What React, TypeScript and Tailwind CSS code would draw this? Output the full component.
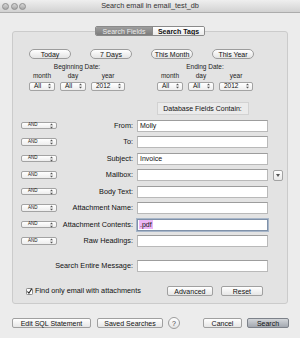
// Search email dialog

const rows = [
  { label: 'From:', value: 'Molly' },
  { label: 'To:' },
  { label: 'Subject:', value: 'Invoice' },
  { label: 'Mailbox:', extra: true },
  { label: 'Body Text:' },
  { label: 'Attachment Name:' },
  { label: 'Attachment Contents:', value: '.pdf', focus: true },
  { label: 'Raw Headings:' },
]

function Arrows() {
  return (
    <svg width="3" height="6" viewBox="0 0 3 6" className="shrink-0">
      <path d="M0 2.3 L1.5 0.6 L3 2.3Z M0 3.7 L1.5 5.4 L3 3.7Z" fill="#555" />
    </svg>
  )
}

function Popup({ value, className }: { value: string; className: string }) {
  return (
    <div
      className={`h-[9px] rounded-[2px] border border-[#a3a3a3] bg-linear-to-b from-white to-[#ededed] flex items-center justify-between pl-[4px] pr-[3px] text-[6.5px] leading-none ${className}`}
    >
      <span>{value}</span>
      <Arrows />
    </div>
  )
}

function Pill({ label, className }: { label: string; className: string }) {
  return (
    <div
      className={`h-[10px] rounded-full border border-[#9c9c9c] bg-linear-to-b from-white to-[#e4e4e4] flex items-center justify-center text-[7px] leading-none ${className}`}
    >
      {label}
    </div>
  )
}

function Button({ label, className, primary }: { label: string; className: string; primary?: boolean }) {
  return (
    <div
      className={`h-[10px] rounded-[2px] border flex items-center justify-center text-[7px] leading-none ${
        primary
          ? 'border-[#7d828a] bg-linear-to-b from-[#d3d6da] to-[#a3a8b0]'
          : 'border-[#a0a0a0] bg-linear-to-b from-white to-[#e6e6e6]'
      } ${className}`}
    >
      {label}
    </div>
  )
}

function TextField({ value, focus }: { value?: string; focus?: boolean }) {
  return (
    <div
      className={`w-[131px] h-[12px] bg-white border flex items-center pl-[1px] text-[7px] leading-none ${
        focus
          ? 'border-[#7f91a9] shadow-[0_0_0_1px_#a7b6c9]'
          : 'border-[#b9b9b9] border-t-[#9d9d9d]'
      }`}
    >
      {focus && value ? (
        <span className="bg-[#ebb7f6] px-[1px] py-[1px]">{value}</span>
      ) : (
        <span className="px-[1px]">{value}</span>
      )}
    </div>
  )
}

function DateGroup({ title, className }: { title: string; className: string }) {
  return (
    <div className={`flex flex-col ${className}`}>
      <div className="h-[8px] text-center text-[6.5px] leading-[8px] text-[#222]">{title}</div>
      <div className="mt-[1px] h-[7px] flex gap-[5px] text-[6.5px] leading-[7px] text-[#222]">
        <div className="w-[26px] text-center">month</div>
        <div className="w-[26px] text-center">day</div>
        <div className="w-[34px] text-center">year</div>
      </div>
      <div className="mt-[2.5px] flex gap-[5px]">
        <Popup value="All" className="w-[26px]" />
        <Popup value="All" className="w-[26px]" />
        <Popup value="2012" className="w-[34px]" />
      </div>
    </div>
  )
}

export default function App() {
  return (
    <div className="w-[300px] h-[338px] bg-[#ececec] flex flex-col text-[#111] font-['Liberation_Sans',Arial,sans-serif] overflow-hidden">
      {/* title bar */}
      <div className="h-[13px] shrink-0 grid grid-cols-[1fr_auto_1fr] items-center border-b border-[#acacac] bg-linear-to-b from-[#efefef] to-[#d2d2d2]">
        <div className="flex gap-[1.5px] pl-[2px]">
          {[0, 1, 2].map((i) => (
            <div
              key={i}
              className="w-[7px] h-[7px] rounded-full border border-[#8f8f8f] bg-linear-to-b from-[#d6d6d6] to-[#a9a9a9]"
            />
          ))}
        </div>
        <div className="text-[7.3px] leading-none text-[#333]">Search email in email_test_db</div>
        <div />
      </div>

      {/* tabs */}
      <div className="mt-[13px] h-[10px] flex justify-center relative z-10">
        <div className="flex rounded-[2px] border border-[#8a8a8a] overflow-hidden text-[7px] leading-none">
          <div className="w-[56px] flex items-center justify-center bg-linear-to-b from-[#9e9e9e] to-[#7c7c7c] text-[#ececec]">
            Search Fields
          </div>
          <div className="w-[52px] flex items-center justify-center bg-linear-to-b from-white to-[#ececec] font-bold border-l border-[#8a8a8a]">
            Search Tags
          </div>
        </div>
      </div>

      {/* group box */}
      <div className="-mt-[5px] ml-[12px] w-[276px] h-[273px] shrink-0 rounded-[3px] border border-[#cbcbcb] bg-[#e3e3e3] flex flex-col">
        <div className="mt-[17px] flex pl-[16px] gap-[19px]">
          <Pill label="Today" className="w-[42px]" />
          <Pill label="7 Days" className="w-[42px]" />
          <Pill label="This Month" className="w-[42px]" />
          <Pill label="This Year" className="w-[42px]" />
        </div>

        <div className="mt-[4px] flex pl-[16px] gap-[32px]">
          <DateGroup title="Beginning Date:" className="w-[96px]" />
          <DateGroup title="Ending Date:" className="w-[96px]" />
        </div>

        <div className="mt-[11px] flex">
          <div className="w-[124px]" />
          <div className="w-[131px] flex justify-center">
            <div className="w-[92px] h-[13px] border border-[#d2d2d2] bg-[#ebebeb] flex items-center justify-center text-[7px] leading-none">
              Database Fields Contain:
            </div>
          </div>
        </div>

        <div className="mt-[5px] flex flex-col gap-[4.5px]">
          {rows.map((r) => (
            <div key={r.label} className="h-[12px] flex items-center">
              <Popup value="AND" className="ml-[8px] w-[36px] !h-[7.5px] !text-[4.5px] !pl-[6px]" />
              <div className="w-[76px] text-right text-[7.3px] leading-none">{r.label}</div>
              <div className="ml-[4px]">
                <TextField value={r.value} focus={r.focus} />
              </div>
              {r.extra && (
                <div className="ml-[5px] w-[10px] h-[11px] rounded-[2px] border border-[#a3a3a3] bg-linear-to-b from-white to-[#e8e8e8] flex items-center justify-center">
                  <svg width="4" height="3" viewBox="0 0 4 3">
                    <path d="M0 0 L4 0 L2 3Z" fill="#555" />
                  </svg>
                </div>
              )}
            </div>
          ))}
        </div>

        <div className="mt-[12.5px] h-[12px] flex items-center">
          <div className="w-[120px] text-right text-[7.3px] leading-none">Search Entire Message:</div>
          <div className="ml-[4px]">
            <TextField />
          </div>
        </div>

        <div className="mt-[14.5px] h-[10px] flex items-center">
          <svg width="7" height="7" viewBox="0 0 7 7" className="ml-[13px] shrink-0">
            <rect x="0.5" y="0.5" width="6" height="6" rx="0.8" fill="white" stroke="#8a8a8a" />
            <path d="M1.4 3.5 L2.9 5.2 L5.8 0.6" fill="none" stroke="#222" strokeWidth="1.1" />
          </svg>
          <div className="ml-[2px] text-[7.3px] leading-none">Find only email with attachments</div>
          <Button label="Advanced" className="ml-[26px] w-[46px]" />
          <Button label="Reset" className="ml-[8px] w-[42px]" />
        </div>
      </div>

      {/* bottom buttons */}
      <div className="mt-[13px] flex items-center pl-[12px]">
        <Button label="Edit SQL Statement" className="w-[79px]" />
        <Button label="Saved Searches" className="ml-[6px] w-[66px]" />
        <div className="ml-[5px] w-[12px] h-[12px] rounded-full border border-[#9c9c9c] bg-linear-to-b from-white to-[#e4e4e4] flex items-center justify-center text-[7px] leading-none text-[#444]">
          ?
        </div>
        <Button label="Cancel" className="ml-[23px] w-[39px]" />
        <Button label="Search" className="ml-[5px] w-[42px]" primary />
      </div>
    </div>
  )
}
